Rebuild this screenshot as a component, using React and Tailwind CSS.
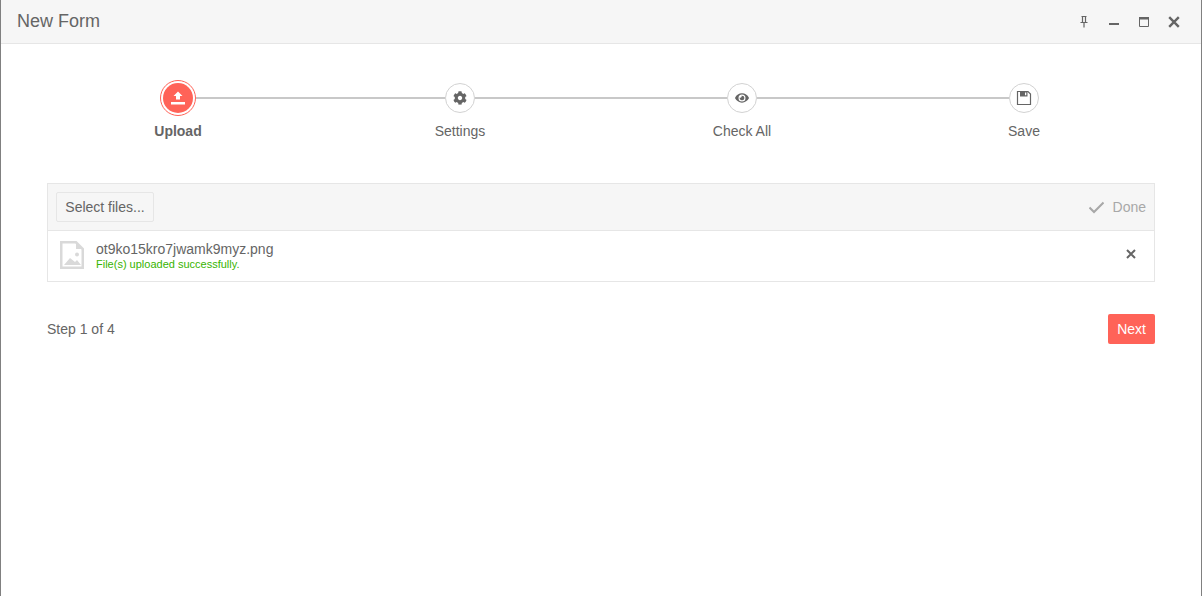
import React from "react";
import { FaCog, FaEye } from "react-icons/fa";

const SaveIcon = () => (
  <svg viewBox="0 0 16 16" className="w-[16px] h-[16px]">
    <path d="M1.5 1.5h10.5l2.5 2.5v10.5h-13z" fill="none" stroke="currentColor" strokeWidth="1.2" />
    <path d="M4 1.5h7.5v5H4z" fill="currentColor" />
    <path d="M9 2.5h1.3v2.8H9z" fill="#fff" />
  </svg>
);

const steps = [
  { label: "Upload", active: true },
  { label: "Settings", icon: <FaCog className="w-[14px] h-[14px]" /> },
  { label: "Check All", icon: <FaEye className="w-[14px] h-[14px]" /> },
  { label: "Save", icon: <SaveIcon /> },
];

const CloseIcon = ({ className }) => (
  <svg viewBox="0 0 10 10" className={className}>
    <path d="M1 1l8 8M9 1l-8 8" stroke="currentColor" strokeWidth="2" fill="none" />
  </svg>
);

const UploadIcon = () => (
  <svg viewBox="0 0 16 16" className="w-4 h-4 text-white">
    <path d="M8 1.5l4.5 4.5H10v3.5H6V6H3.5z M1 12h14v2.5H1z" fill="currentColor" />
  </svg>
);

const StepCircle = ({ step }) =>
  step.active ? (
    <div className="w-[36px] h-[36px] shrink-0 rounded-full border border-[#ff6358] bg-white p-[2px]">
      <div className="w-full h-full rounded-full bg-[#ff6358] flex items-center justify-center">
        <UploadIcon />
      </div>
    </div>
  ) : (
    <div className="w-[30px] h-[30px] shrink-0 rounded-full border border-[#d2d2d2] bg-white flex items-center justify-center text-[#656565]">
      {step.icon}
    </div>
  );

const App = () => {
  return (
    <div
      className="w-[1202px] h-[596px] bg-white border-x border-[#808080] flex flex-col text-[#656565] text-sm overflow-hidden"
      style={{ fontFamily: '"Liberation Sans", Arial, sans-serif' }}
    >
      {/* title bar */}
      <div className="h-[44px] shrink-0 bg-[#f6f6f6] border-b border-[#e6e6e6] flex items-center pl-[16px] pr-[20px]">
        <div className="text-[18px] flex-1">New Form</div>
        <div className="flex items-center gap-[16px] text-[#656565]">
          <svg viewBox="0 0 14 14" className="w-[14px] h-[14px]">
            <path d="M4.5 1.5h5M5.5 1.5v5.5M8.5 1.5v5.5M3.5 7.5h7M7 7.5v5" stroke="currentColor" strokeWidth="1.2" fill="none" />
          </svg>
          <svg viewBox="0 0 14 14" className="w-[14px] h-[14px]">
            <path d="M2 9h10" stroke="currentColor" strokeWidth="2" fill="none" />
          </svg>
          <svg viewBox="0 0 14 14" className="w-[14px] h-[14px]">
            <path d="M2.5 3v8.5h9V3z" stroke="currentColor" strokeWidth="1" fill="none" />
            <path d="M2 2h10v2.5H2z" fill="currentColor" />
          </svg>
          <CloseIcon className="w-[12px] h-[12px] mx-[1px]" />
        </div>
      </div>

      <div className="flex-1 px-[46px] pt-[36px]">
        {/* stepper */}
        <div className="mx-[-10px] w-[1128px]">
          <div className="grid grid-cols-4 h-[36px]">
            {steps.map((step, i) => (
              <div key={step.label} className="flex items-center">
                <div className={`flex-1 h-[2px] ${i > 0 ? "bg-[#c8c8c8]" : ""}`} />
                <StepCircle step={step} />
                <div className={`flex-1 h-[2px] ${i < steps.length - 1 ? "bg-[#c8c8c8]" : ""}`} />
              </div>
            ))}
          </div>
          <div className="grid grid-cols-4 mt-[5px] leading-[20px]">
            {steps.map((step) => (
              <div key={step.label} className={`text-center ${step.active ? "font-bold" : ""}`}>
                {step.label}
              </div>
            ))}
          </div>
        </div>

        {/* upload box */}
        <div className="mt-[42px] border border-[#e6e6e6]">
          <div className="h-[47px] bg-[#f6f6f6] border-b border-[#e6e6e6] flex items-center justify-between pl-[8px] pr-[8px]">
            <div className="h-[30px] w-[98px] flex items-center justify-center bg-[#f6f6f6] border border-[#e6e6e6] rounded-[2px]">
              Select files...
            </div>
            <div className="flex items-center gap-[9px] text-[#a8a8a8]">
              <svg viewBox="0 0 15 15" className="w-[15px] h-[15px]">
                <path d="M0.5 7.5l4.5 4.5 9.5-9.5" stroke="currentColor" strokeWidth="2" fill="none" />
              </svg>
              <span>Done</span>
            </div>
          </div>
          <div className="h-[50px] flex items-center pl-[12px] pr-[18px]">
            <svg viewBox="0 0 24 28" className="w-[24px] h-[28px] shrink-0 mt-[-2px]">
              <path d="M1.25 1.25h14.75l6.75 6.75v18.75h-21.5z" fill="none" stroke="#d9d9d9" strokeWidth="2.5" />
              <path d="M16 1v7h7z" fill="#d9d9d9" />
              <circle cx="17" cy="13.5" r="2" fill="#d9d9d9" />
              <path d="M4 24l6-7 5 4 2-2 4 5z" fill="#d9d9d9" />
            </svg>
            <div className="ml-[12px] flex-1">
              <div className="leading-[16px] mt-[-1px]">ot9ko15kro7jwamk9myz.png</div>
              <div className="text-[11px] leading-[14px] text-[#37b400]">File(s) uploaded successfully.</div>
            </div>
            <CloseIcon className="w-[10px] h-[10px] mt-[-4px]" />
          </div>
        </div>

        {/* footer */}
        <div className="mt-[32px] flex items-center justify-between">
          <div>Step 1 of 4</div>
          <div className="h-[30px] px-[9px] flex items-center rounded-[2px] bg-[#ff6358] text-white">Next</div>
        </div>
      </div>
    </div>
  );
};

export default App;
